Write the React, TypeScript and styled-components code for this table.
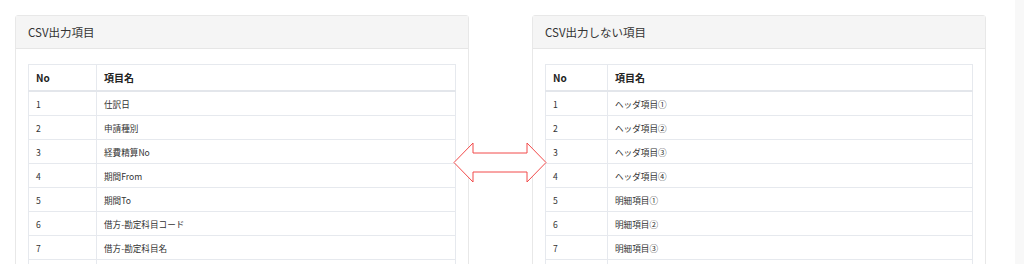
import React from "react";
import styled, { createGlobalStyle } from "styled-components";

const GlobalStyle = createGlobalStyle`
  html, body {
    margin: 0;
    padding: 0;
    background: #ffffff;
    overflow: hidden;
  }
  body {
    font-family: "Noto Sans CJK JP", "Noto Sans", sans-serif;
    color: #333333;
  }
`;

const Page = styled.div`
  display: flex;
  width: 1024px;
  height: 264px;
  overflow: hidden;
`;

const Main = styled.div`
  flex: 1;
  padding: 15px 0 0 15px;
`;

const SideStrip = styled.div`
  width: 9px;
  background: #f8f8f8;
`;

const Columns = styled.div`
  position: relative;
  display: flex;
  gap: 63px;
`;

const Panel = styled.section`
  width: 454px;
  box-sizing: border-box;
  border: 1px solid #e8e8e8;
  border-radius: 3px;
  background: #ffffff;
`;

const PanelHeader = styled.div`
  height: 32px;
  display: flex;
  align-items: center;
  padding: 0 12px;
  background: #f5f5f5;
  border-bottom: 1px solid #e6e6e6;
  font-size: 11.5px;
  color: #333333;
`;

const PanelBody = styled.div`
  padding: 15px 12px 12px;
`;

const Table = styled.table`
  width: 428px;
  border-collapse: collapse;
  table-layout: fixed;
  font-size: 8.6px;
`;

const HeadCell = styled.th<{ $width?: number }>`
  width: ${(p) => (p.$width ? `${p.$width}px` : "auto")};
  height: 25px;
  padding: 0 7px;
  text-align: left;
  font-size: 10px;
  font-weight: 700;
  color: #222222;
  border: 1px solid #e6e9ee;
  border-bottom: 2px solid #e3e6eb;
`;

const Cell = styled.td`
  height: 23px;
  padding: 0 7px;
  border: 1px solid #e6e9ee;
  color: #333333;
  white-space: nowrap;
`;

const ArrowMark = styled.svg`
  position: absolute;
  left: 438px;
  top: 127px;
`;

type Props = { title: string; noWidth: number; items: string[] };

const ItemPanel = ({ title, noWidth, items }: Props) => (
  <Panel>
    <PanelHeader>{title}</PanelHeader>
    <PanelBody>
      <Table>
        <thead>
          <tr>
            <HeadCell $width={noWidth}>No</HeadCell>
            <HeadCell>項目名</HeadCell>
          </tr>
        </thead>
        <tbody>
          {items.map((item, i) => (
            <tr key={i}>
              <Cell>{i + 1}</Cell>
              <Cell>{item}</Cell>
            </tr>
          ))}
          {/* next row only starts at the bottom edge */}
          <tr>
            <Cell />
            <Cell />
          </tr>
        </tbody>
      </Table>
    </PanelBody>
  </Panel>
);

const outputItems = [
  "仕訳日",
  "申請種別",
  "経費精算No",
  "期間From",
  "期間To",
  "借方-勘定科目コード",
  "借方-勘定科目名",
];

const skippedItems = [
  "ヘッダ項目①",
  "ヘッダ項目②",
  "ヘッダ項目③",
  "ヘッダ項目④",
  "明細項目①",
  "明細項目②",
  "明細項目③",
];

const App = () => (
  <>
    <GlobalStyle />
    <Page>
      <Main>
        <Columns>
          <ItemPanel title="CSV出力項目" noWidth={53} items={outputItems} />
          <ItemPanel title="CSV出力しない項目" noWidth={47} items={skippedItems} />
          <ArrowMark width="95" height="42" viewBox="0 0 95 42">
            <path
              d="M1 20.5 L20 1 L20 11 L74 11 L74 1 L93 20.5 L74 40 L74 30 L20 30 L20 40 Z"
              fill="#ffffff"
              stroke="#f24a4a"
              strokeWidth="1"
            />
          </ArrowMark>
        </Columns>
      </Main>
      <SideStrip />
    </Page>
  </>
);

export default App;
